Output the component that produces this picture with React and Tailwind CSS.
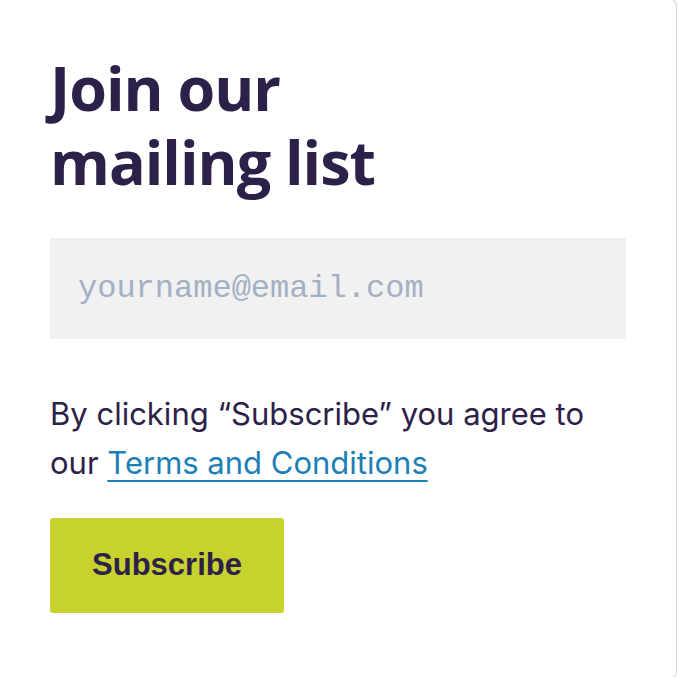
import React, { useState } from "react";

const App = () => {
  const [email, setEmail] = useState("");

  return (
    <div className="w-[678px] h-[678px] bg-white">
      <div className="w-[677px] h-[679px] -mt-px bg-white border-r border-y border-[#d4d4d4] rounded-r-[6px] pl-[50px] pt-[51px]">
        <h1 className="font-['Open_Sans',sans-serif] font-bold text-[61px] leading-[74px] tracking-[-1px] text-[#2e2149]">
          Join our
          <br />
          mailing list
        </h1>

        <input
          type="email"
          value={email}
          onChange={(e) => setEmail(e.target.value)}
          placeholder="yourname@email.com"
          className="mt-[39px] block w-[576px] h-[101px] bg-[#f1f1f1] px-[28px] font-['Liberation_Mono',monospace] text-[32px] text-[#2e2149] placeholder:text-[#a3b0c4] outline-none"
        />

        <p className="mt-[50px] font-['Inter',sans-serif] text-[31px] leading-[49px] text-[#2e2149]">
          By clicking “Subscribe” you agree to
          <br />
          our{" "}
          <a href="#" className="text-[#1c7fb6] underline underline-offset-[6px] decoration-[2px]">
            Terms and Conditions
          </a>
        </p>

        <button
          type="button"
          className="mt-[31px] block w-[234px] h-[95px] rounded-[3px] bg-[#c7d22e] font-['Liberation_Sans',sans-serif] font-bold text-[31px] text-[#2e2149]"
        >
          Subscribe
        </button>
      </div>
    </div>
  );
};

export default App;
